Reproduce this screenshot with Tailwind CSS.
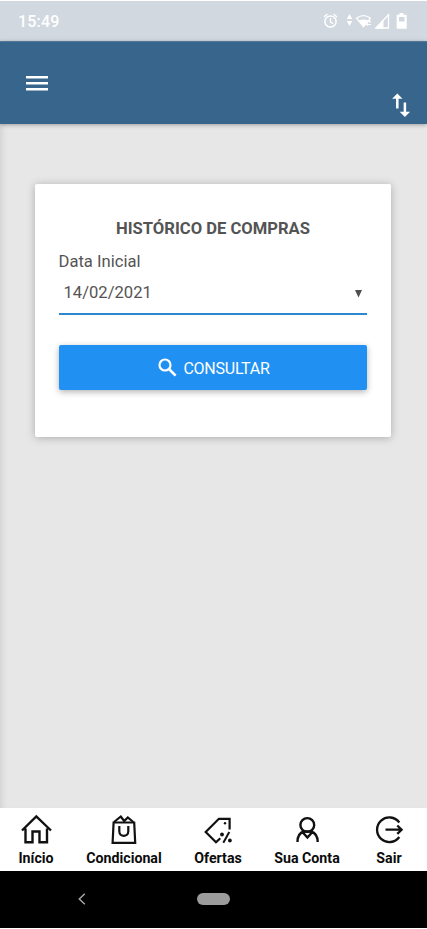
<!DOCTYPE html>
<html lang="pt-BR">
<head>
<meta charset="utf-8">
<meta name="viewport" content="width=device-width, initial-scale=1">
<title>Histórico de Compras</title>
<script src="https://cdn.jsdelivr.net/npm/@tailwindcss/browser@4"></script>
</head>
<body class="bg-white font-[Roboto,sans-serif]">
<div class="flex flex-col w-[427px] h-[929px] overflow-hidden pt-px pb-px">
  <div class="h-10 shrink-0 bg-[#d1d8df] flex items-center justify-between pl-[18px] pr-[19px] text-white">
    <span class="text-[16px] leading-5 font-medium tracking-[0.2px] pt-px">15:49</span>
    <svg class="w-[86px] h-5" viewBox="322 11 86 20" fill="none" stroke="white">
      <circle cx="330.500" cy="21.500" r="5.600" stroke-width="1.500"/>
      <path d="M330.500 18v4l2.500 1.700M324 17l3.400-3M337 17l-3.400-3" stroke-width="1.400"/>
      <path d="M349.500 14l2.800 5h-5.600zM349.500 26l2.800-5h-5.600z" fill="white" stroke="none"/>
      <path d="M356.500 18.200q7-5.200 14 0l-7 8.600z" stroke-width="1.300"/>
      <path d="M358.800 20.500q4.700-2 9.400 0l-4.700 6.500z" fill="white" stroke="none"/>
      <path d="M366 21.500h4.500M369 20l1.700 1.500-1.700 1.500M371 24.500h-4M368 23l-1.700 1.500 1.700 1.500" stroke-width="1"/>
      <path d="M376 28l12.500-13.300V28z" stroke-width="1.300"/>
      <path d="M375 28.500l8.500-8.800v8.800z" fill="white" stroke="none"/>
      <path d="M399.500 13h4v1.800h3.200v14h-10v-14h2.800z" fill="white" stroke="none"/>
      <path d="M399 17h5.500v4.500H399z" fill="#d1d8df" stroke="none"/>
    </svg>
  </div>
  <header class="relative z-10 h-[83px] shrink-0 bg-[#37658b] border-t border-[#537898] shadow-[0_1px_4px_rgba(0,0,0,0.3)] flex justify-between pl-[26px] pr-[16px]">
    <svg class="w-[22px] h-4 mt-[33px]" viewBox="0 0 22 16" fill="none" stroke="white" stroke-width="2.400"><path d="M0 2.300h22M0 8.300h22M0 14.300h22"/></svg>
    <svg class="w-[19px] h-6 mt-[51px]" viewBox="392 93 19 24" fill="none" stroke="white" stroke-width="2.500"><path d="M397.300 108.500V97M404.900 102.500v11.500"/><path d="M397.300 93.500l5.200 5.300h-10.400zM404.900 117l5.200-5.300h-10.400z" fill="white" stroke="none"/></svg>
  </header>
  <main class="flex-1 bg-[#e7e7e7] pt-[60px] pl-[35px] pr-[36px] shadow-[inset_6px_0_6px_-4px_rgba(0,0,0,0.1)]">
    <section class="h-[253px] bg-white rounded-[2px] shadow-[0_1px_9px_rgba(0,0,0,0.26)] pl-6 pr-6 pt-[35px] text-[#545454]">
      <h1 class="text-center text-[16.600px] leading-5 font-bold whitespace-nowrap">HISTÓRICO DE COMPRAS</h1>
      <label class="block mt-[13px] -ml-[0.500px] text-[16.600px] leading-5">Data Inicial</label>
      <div class="mt-[5px] -ml-[0.500px] h-[38px] border-b-[2px] border-[#2e88d0] flex justify-between pl-[5px] pr-[4px] text-[16.600px] leading-5 pt-[5px]">
        <span class="pt-px">14/02/2021</span>
        <svg class="w-[9px] h-[9px] mt-[7px]" viewBox="0 0 9 9" fill="#505050"><path d="M1 1h7L4.500 8.500z"/></svg>
      </div>
      <button class="mt-[30px] h-[45px] w-full bg-[#2090f3] rounded-[2px] shadow-[0_2px_6px_rgba(0,0,0,0.3)] flex items-center justify-center gap-[6px] pl-[2px] text-white text-[16px] leading-5">
        <svg class="w-[19px] h-[19px]" viewBox="0 0 19 19" fill="none" stroke="white"><circle cx="7" cy="7" r="5.500" stroke-width="2.200"/><path d="M11 11l6.600 6.600" stroke-width="2.700"/></svg>
        <span class="tracking-[-0.250px] pt-[2px]">CONSULTAR</span>
      </button>
    </section>
  </main>
  <nav class="h-[63px] shrink-0 bg-white grid grid-cols-[72px_104px_84px_94px_70px] text-[14.200px] leading-[18px] font-bold text-[#0b0b0b] text-center whitespace-nowrap">
    <a class="flex flex-col items-center pt-[5px]"><svg class="w-8 h-8" viewBox="20 813 32 32" fill="none" stroke="#111" stroke-width="2.400"><path d="M22 830.500l14.300-14L51 830.500M25.500 828.500v13.800h7V831.500h7v10.800H47v-13.800"/></svg><span class="mt-1">Início</span></a>
    <a class="flex flex-col items-center pt-[5px]"><svg class="w-8 h-8" viewBox="108 813 32 32" fill="none" stroke="#111" stroke-width="2.200"><path d="M113.600 822.500h20.600l1 20.300h-22.600z"/><path d="M114 822l6.800-5.500 3.400 4.500 3.600-3.500 5.500 4.500" stroke-width="2.200"/><path d="M119.300 826v5.300c0 6.200 9 6.200 9 0V826"/></svg><span class="mt-1">Condicional</span></a>
    <a class="flex flex-col items-center pt-[5px]"><svg class="w-8 h-8" viewBox="202 813 32 32" fill="none" stroke="#111" stroke-width="2.200"><path d="M229.600 829.500V818.800h-10.700l-13.200 13.200 10.300 10.300 4.300-4"/><circle cx="225" cy="823.300" r="1.200" fill="#111" stroke="none"/><circle cx="222" cy="834.500" r="1.900" fill="#111" stroke="none"/><circle cx="229.900" cy="840.500" r="1.900" fill="#111" stroke="none"/><path d="M229.300 832l-6 10.800" stroke-width="2"/></svg><span class="mt-1">Ofertas</span></a>
    <a class="flex flex-col items-center pt-[5px]"><svg class="w-8 h-8" viewBox="291 813 32 32" fill="none" stroke="#111" stroke-width="2.400"><circle cx="307.300" cy="825" r="6.900"/><path d="M297.500 842c0-6.200 2.200-9.300 6.300-10.500l3.600 0 3.500 0c4.300 1.300 6.800 4.600 6.800 10.500M302.600 832.200l4.800 5.300 4.800-5.300"/></svg><span class="mt-1">Sua Conta</span></a>
    <a class="flex flex-col items-center pt-[5px]"><svg class="w-8 h-8" viewBox="373 813 32 32" fill="none" stroke="#111" stroke-width="2.300"><path d="M399.300 822.500a12.300 12.300 0 1 0 0 14.500M385.500 829.700h15.500M397.300 825.500l4.300 4.200-4.300 4.200"/></svg><span class="mt-1">Sair</span></a>
  </nav>
  <div class="h-[57px] shrink-0 bg-black grid grid-cols-[163px_100px_1fr] items-center justify-items-center pb-px">
    <svg class="w-2 h-3" viewBox="0 0 8 12" fill="none" stroke="#a5a5a5" stroke-width="1.500"><path d="M6.800.800L1.300 6l5.500 5.200"/></svg>
    <div class="w-[33px] h-3 rounded-full bg-[#9c9c9c]"></div>
  </div>
</div>
</body>
</html>
